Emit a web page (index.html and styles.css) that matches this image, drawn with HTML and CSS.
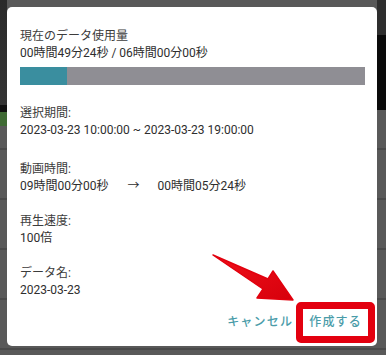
FILE: index.html
```html
<!DOCTYPE html>
<html lang="ja">
<head>
  <meta charset="UTF-8" />
  <meta name="viewport" content="width=device-width, initial-scale=1.0" />
  <title>データ作成</title>
  <link rel="stylesheet" href="styles.css">
</head>
<body>
  <div class="dialog">
    <div class="field">
      <div class="label">現在のデータ使用量</div>
      <div class="value">00時間49分24秒 / 06時間00分00秒</div>
    </div>
    <div class="usage">
      <div class="usage-fill" style="width:13.7%"></div>
    </div>

    <div class="field first">
      <div class="label">選択期間:</div>
      <div class="value">2023-03-23 10:00:00 ~ 2023-03-23 19:00:00</div>
    </div>
    <div class="field">
      <div class="label">動画時間:</div>
      <div class="value">09時間00分00秒<span class="to">→</span>00時間05分24秒</div>
    </div>
    <div class="field">
      <div class="label">再生速度:</div>
      <div class="value">100倍</div>
    </div>
    <div class="field last">
      <div class="label">データ名:</div>
      <div class="value">2023-03-23</div>
    </div>

    <div class="actions">
      <button class="btn">キャンセル</button>
      <button class="btn marked">作成する</button>
    </div>

    <!-- annotation arrow -->
    <svg class="pointer" width="100" height="60" viewBox="0 0 100 60">
      <defs>
        <linearGradient id="red" x1="0" y1="0" x2="1" y2="1">
          <stop offset="0" stop-color="#f0101a" />
          <stop offset="1" stop-color="#d6000c" />
        </linearGradient>
      </defs>
      <polygon points="14,9 69,33 74,25 94,54 58,52 64,43" fill="url(#red)" stroke="#e2000e" stroke-width="1.5" stroke-linejoin="round" />
    </svg>
  </div>
</body>
</html>
```

FILE: styles.css
```css
body {
  margin: 0;
  width: 386px;
  height: 355px;
  overflow: hidden;
  font-family: Roboto, "Noto Sans CJK JP", sans-serif;
  background:
    linear-gradient(to bottom, #2e2e2e 0, #2e2e2e 35px, #0a0a0a 35px, #0a0a0a 110px, transparent 110px) right top / 9px 100% no-repeat,
    linear-gradient(to bottom, #2a2a2a 0, #343434 105px, #111 105px, #111 112px, #3f6a34 112px, #3f6a34 126px, transparent 126px) left top / 7px 100% no-repeat,
    repeating-linear-gradient(to bottom, #595959 0, #595959 48px, #4a4a4a 48px, #4a4a4a 50px),
    #575757;
}
.dialog {
  position: relative;
  box-sizing: border-box;
  width: 370px;
  height: 339px;
  margin: 7px 0 0 7px;
  padding: 21px 12px 3px 13px;
  background: #fff;
  border-radius: 5px;
  display: flex;
  flex-direction: column;
}
.dialog > * {
  flex-shrink: 0;
}
.field {
  font-size: 12px;
  line-height: 17px;
  color: #2e2e2e;
  margin-bottom: 18px;
}
.field:first-child,
.field.last {
  margin-bottom: 0;
}
.field.first {
  margin-bottom: 22px;
}
.label {
  color: #3c3c3c;
}
.value {
  white-space: nowrap;
}
.to {
  margin: 0 18px 0 19px;
}
.usage {
  height: 18px;
  margin: 5px 0 20px;
  background: #8f8e94;
}
.usage-fill {
  height: 100%;
  background: #3a8e9f;
}
.actions {
  margin-top: auto;
  margin-right: -10px;
  display: flex;
  justify-content: flex-end;
  align-items: center;
  gap: 3px;
}
.btn {
  font-family: Roboto, "Noto Sans CJK JP", sans-serif;
  font-size: 12px;
  font-weight: 500;
  letter-spacing: 1.2px;
  color: #4a9ca9;
  background: none;
  border: 0;
  padding: 0;
  line-height: 17px;
}
.btn.marked {
  border: 7px solid #e3000f;
  border-radius: 5px;
  padding: 5px 6px;
}
.pointer {
  position: absolute;
  left: 192px;
  top: 239px;
}
```
